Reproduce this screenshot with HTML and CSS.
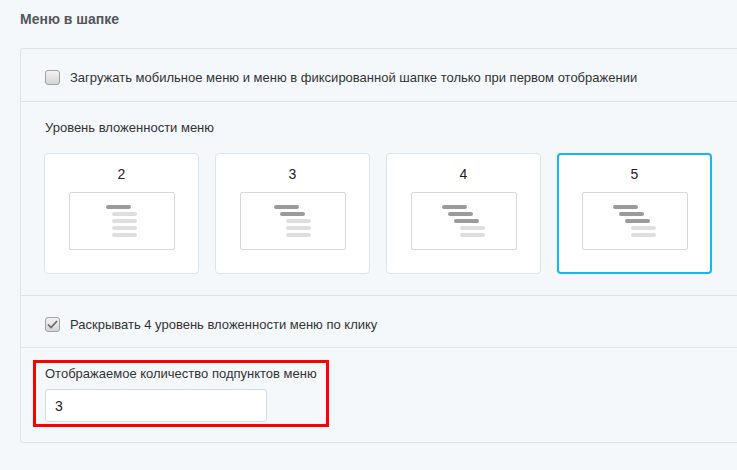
FILE: index.html
```html
<!DOCTYPE html>
<html lang="ru">
<head>
    <meta charset="UTF-8">
    <meta name="viewport" content="width=device-width, initial-scale=1.0">
    <title>Меню в шапке</title>
    <link rel="stylesheet" href="styles.css">
</head>
<body>
    <div class="page">
        <h2 class="section-title">Меню в шапке</h2>

        <div class="panel">
            <label class="row check-row">
                <span class="checkbox"></span>
                <span>Загружать мобильное меню и меню в фиксированной шапке только при первом отображении</span>
            </label>

            <div class="row levels-row">
                <div class="field-label">Уровень вложенности меню</div>
                <div class="levels">
                    <div class="level-card">
                        <div class="level-num">2</div>
                        <div class="preview">
                            <div class="bars">
                                <span class="bar dark"></span>
                                <span class="bar light i1"></span>
                                <span class="bar light i1"></span>
                                <span class="bar light i1"></span>
                                <span class="bar light i1"></span>
                            </div>
                        </div>
                    </div>
                    <div class="level-card">
                        <div class="level-num">3</div>
                        <div class="preview">
                            <div class="bars">
                                <span class="bar dark"></span>
                                <span class="bar dark i1"></span>
                                <span class="bar light i2"></span>
                                <span class="bar light i2"></span>
                                <span class="bar light i2"></span>
                            </div>
                        </div>
                    </div>
                    <div class="level-card">
                        <div class="level-num">4</div>
                        <div class="preview">
                            <div class="bars">
                                <span class="bar dark"></span>
                                <span class="bar dark i1"></span>
                                <span class="bar dark i2"></span>
                                <span class="bar light i3"></span>
                                <span class="bar light i3"></span>
                            </div>
                        </div>
                    </div>
                    <div class="level-card active">
                        <div class="level-num">5</div>
                        <div class="preview">
                            <div class="bars">
                                <span class="bar dark"></span>
                                <span class="bar dark i1"></span>
                                <span class="bar dark i2"></span>
                                <span class="bar light i3"></span>
                                <span class="bar light i3"></span>
                            </div>
                        </div>
                    </div>
                </div>
            </div>

            <label class="row check-row">
                <span class="checkbox checked">
                    <svg width="11" height="9" viewBox="0 0 11 9">
                        <path d="M1 4.5 L4 7.5 L10 1" fill="none" stroke="#666" stroke-width="1.6"/>
                    </svg>
                </span>
                <span>Раскрывать 4 уровень вложенности меню по клику</span>
            </label>

            <div class="row count-row">
                <div class="highlight">
                    <div class="field-label">Отображаемое количество подпунктов меню</div>
                    <input type="text" class="text-input" value="3">
                </div>
            </div>
        </div>
    </div>
</body>
</html>
```

FILE: styles.css
```css
* {
    box-sizing: border-box;
    margin: 0;
    padding: 0;
}

body {
    background: #f5f8fa;
    font-family: 'Liberation Sans', Arial, sans-serif;
    font-size: 13px;
    color: #333;
    overflow: hidden;
}

.page {
    padding: 11px 0 0 20px;
}

.section-title {
    font-size: 14px;
    font-weight: bold;
    color: #50575d;
    line-height: 16px;
    margin-bottom: 21px;
}

.panel {
    width: 740px;
    border: 1px solid #dde5ec;
    border-right: none;
    border-radius: 3px 0 0 3px;
}

.row {
    border-top: 1px solid #dde5ec;
    padding: 0 24px;
}

.row:first-child {
    border-top: none;
}

/* checkbox rows */
.check-row {
    display: flex;
    align-items: center;
    gap: 10px;
    height: 52px;
    padding-top: 5px;
    line-height: 15px;
}

.checkbox {
    width: 15px;
    height: 15px;
    flex: none;
    border: 1px solid #a3a3a3;
    border-radius: 3px;
    background: linear-gradient(to bottom, #f2f2f2, #d5d5d5);
    display: flex;
    align-items: center;
    justify-content: center;
}

/* nesting levels */
.levels-row {
    padding-top: 18px;
    padding-bottom: 21px;
}

.field-label {
    line-height: 15px;
}

.levels {
    display: flex;
    gap: 16px;
    margin: 18px 0 0 -1px;
}

.level-card {
    width: 155px;
    background: #fff;
    border: 1px solid #dde5ec;
    border-radius: 4px;
    padding: 12px 0 23px;
    display: flex;
    flex-direction: column;
    align-items: center;
}

.level-card.active {
    border: 2px solid #16b5f5;
    padding: 11px 0 22px;
}

.level-num {
    font-size: 14px;
    line-height: 16px;
    color: #222;
    margin-bottom: 10px;
}

.preview {
    width: 106px;
    height: 58px;
    border: 1px solid #d9d9d9;
    border-radius: 2px;
    display: flex;
    align-items: center;
    justify-content: center;
}

.bars {
    display: flex;
    flex-direction: column;
    gap: 3px;
}

.bar {
    display: block;
    width: 25px;
    height: 4px;
    border-radius: 2px;
}

.bar.dark { background: #9b9b9b; }
.bar.light { background: #dedede; }
.bar.i1 { margin-left: 6px; }
.bar.i2 { margin-left: 12px; }
.bar.i3 { margin-left: 18px; }

/* submenu count */
.count-row {
    padding: 12px 0 15px 12px;
}

.highlight {
    width: 296px;
    border: 3px solid #f00;
    padding: 3px 0 2px 9px;
}

.highlight .field-label {
    margin-bottom: 8px;
}

.text-input {
    display: block;
    width: 222px;
    height: 33px;
    border: 1px solid #d3dde6;
    border-radius: 3px;
    background: #fff;
    padding: 0 9px;
    font-family: 'Liberation Sans', Arial, sans-serif;
    font-size: 14px;
    color: #222;
    outline: none;
}
```
